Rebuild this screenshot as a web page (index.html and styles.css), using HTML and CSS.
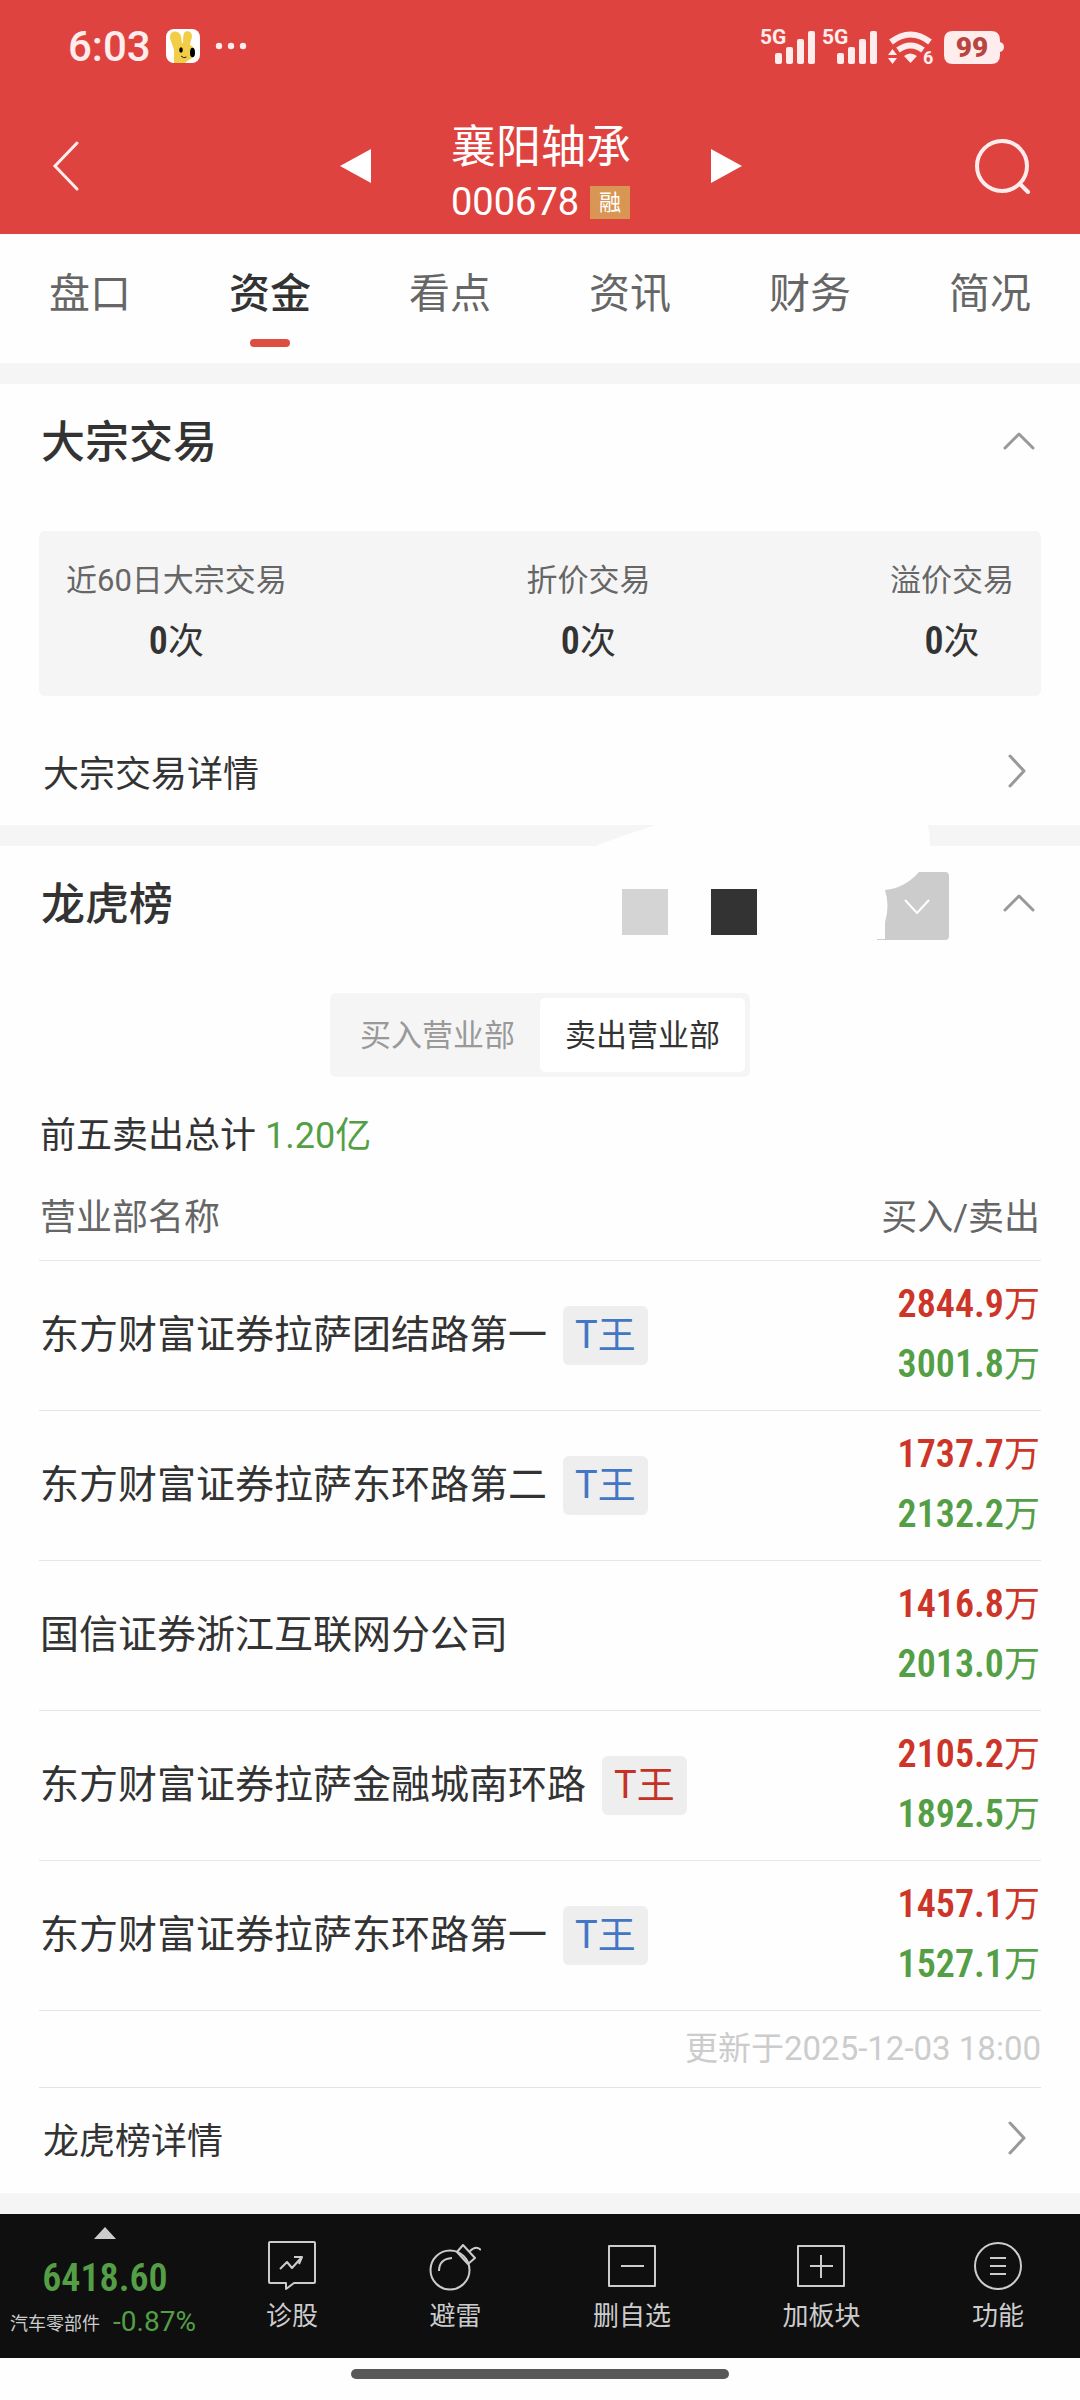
FILE: index.html
```html
<!DOCTYPE html>
<html lang="zh-CN">
<head>
<meta charset="utf-8">
<meta name="viewport" content="width=device-width, initial-scale=1">
<title>襄阳轴承 000678</title>
<link rel="stylesheet" href="styles.css">
</head>
<body>
<header class="top">
  <div class="status">
    <span class="clock">6:03</span>
    <svg class="app-icon" width="34" height="34" viewBox="0 0 34 34" aria-hidden="true">
      <rect width="34" height="34" rx="8" fill="#fff"/>
      <path d="M8 34V21C7 16 4 12 4 8c0-7 9-7 11-1l1 7h1c0-4 0-7 1-10 2-3 8-2 8 3 0 3-2 6-2 9 4 2 6 6 4 11-2 3-6 4-9 7z" fill="#f2cd47"/>
      <ellipse cx="15" cy="21" rx="1.800" ry="2.800"/><ellipse cx="26.500" cy="23.500" rx="2.500" ry="4.800"/>
      <path d="M15 27q3 3 5.500 1" fill="none" stroke="#222" stroke-width="1"/>
    </svg>
    <svg width="32" height="8" viewBox="0 0 32 8" aria-hidden="true"><g fill="#ffecec"><circle cx="4" cy="4" r="3.200"/><circle cx="16" cy="4" r="3.200"/><circle cx="28" cy="4" r="3.200"/></g></svg>
    <svg class="signals" width="246" height="52" viewBox="0 -6 246 52" aria-label="信号与电量">
      <g fill="#ffecec">
        <text class="net" x="0" y="18">5G</text>
        <rect x="15" y="27" width="7" height="11" rx="2"/><rect x="26" y="21" width="7" height="17" rx="2"/><rect x="37" y="13" width="7" height="25" rx="2"/><rect x="48" y="5" width="7" height="33" rx="2"/>
        <text class="net" x="62" y="18">5G</text>
        <rect x="77" y="27" width="7" height="11" rx="2"/><rect x="88" y="21" width="7" height="17" rx="2"/><rect x="99" y="13" width="7" height="25" rx="2"/><rect x="110" y="5" width="7" height="33" rx="2"/>
        <path d="M144 30q6-5 13 0l-6.500 7z"/>
        <path d="M128 29l4.500-6 4.500 6zM128 32h9l-4.500 6z"/>
        <text class="gen" x="163" y="38">6</text>
        <path d="M193 5h38q9 0 9 9v2q4 1 4 5t-4 5v3q0 9-9 9h-38q-9 0-9-9V14q0-9 9-9z"/>
      </g>
      <path d="M131 16q19.500-15 39 0M138 24q12.500-9 25 0" fill="none" stroke="#ffecec" stroke-width="6"/>
      <text class="level" x="212" y="31" text-anchor="middle">99</text>
    </svg>
  </div>
  <div class="titlebar">
    <button class="icon-btn" aria-label="返回"><svg width="28" height="50" viewBox="0 0 28 50"><path d="M26 2L4 25l22 23" fill="none" stroke="#ffecec" stroke-width="3" stroke-linecap="round"/></svg></button>
    <div class="switcher">
      <button class="icon-btn" aria-label="上一只"><svg width="31" height="34" viewBox="0 0 31 34"><path d="M31 0v34L0 17z" fill="#fff"/></svg></button>
      <div class="stock">
        <h1 class="stock-name">襄阳轴承</h1>
        <div class="stock-code">000678<span class="margin-tag">融</span></div>
      </div>
      <button class="icon-btn" aria-label="下一只"><svg width="31" height="34" viewBox="0 0 31 34"><path d="M0 0v34l31-17z" fill="#fff"/></svg></button>
    </div>
    <button class="icon-btn search" aria-label="搜索"><svg width="58" height="56" viewBox="0 0 58 56"><g fill="none" stroke="#ffecec" stroke-width="4" stroke-linecap="round"><circle cx="29" cy="28" r="25"/><path d="M47 46l8 8"/></g></svg></button>
  </div>
</header>

<nav class="tabs">
  <a href="#" class="tab">盘口</a>
  <a href="#" class="tab tab-active">资金</a>
  <a href="#" class="tab">看点</a>
  <a href="#" class="tab">资讯</a>
  <a href="#" class="tab">财务</a>
  <a href="#" class="tab">简况</a>
</nav>

<main>
  <div class="band"></div>
  <section class="panel">
    <div class="panel-head">
      <h2 class="panel-title">大宗交易</h2>
      <button class="icon-btn" aria-label="收起"><svg width="32" height="18" viewBox="0 0 32 18"><path class="chev" d="M2 16L16 2l14 14"/></svg></button>
    </div>
    <dl class="stats">
      <div class="stat"><dt>近60日大宗交易</dt><dd><b class="din">0</b>次</dd></div>
      <div class="stat"><dt>折价交易</dt><dd><b class="din">0</b>次</dd></div>
      <div class="stat"><dt>溢价交易</dt><dd><b class="din">0</b>次</dd></div>
    </dl>
    <a href="#" class="more more-spaced">大宗交易详情<svg class="more-icon" width="18" height="34" viewBox="0 0 18 34"><path class="chev" d="M2 2l14 15L2 32"/></svg></a>
  </section>

  <div class="band">
    <svg class="band-gap" width="336" height="21" viewBox="0 0 336 21" aria-hidden="true"><path d="M2 21Q24 12 62 0h272q2 10 2 21z" fill="#fefefe"/></svg>
  </div>

  <section class="panel">
    <div class="panel-head">
      <h2 class="panel-title">龙虎榜</h2>
      <svg class="marks" width="327" height="68" viewBox="0 0 327 68" aria-hidden="true">
        <rect y="17" width="46" height="46" fill="#d4d4d4"/>
        <rect x="89" y="17" width="46" height="46" fill="#333"/>
        <path d="M297 0h26q4 0 4 4v60q0 4-4 4h-68v-1h8V50q5-16 0-32 20-2 34-18z" fill="#ccc"/>
        <path d="M283 28l12 13 12-13" fill="none" stroke="#fff" stroke-width="2"/>
      </svg>
      <button class="icon-btn" aria-label="收起"><svg width="32" height="18" viewBox="0 0 32 18"><path class="chev" d="M2 16L16 2l14 14"/></svg></button>
    </div>
    <div class="segment">
      <button class="seg">买入营业部</button>
      <button class="seg seg-active">卖出营业部</button>
    </div>
    <p class="total">前五卖出总计 <span class="down">1.20亿</span></p>
    <table class="board">
      <thead><tr><th>营业部名称</th><th class="num">买入/卖出</th></tr></thead>
      <tbody>
        <tr><td>东方财富证券拉萨团结路第一<span class="tag">T王</span></td><td class="num"><div class="up"><b class="din">2844.9</b>万</div><div class="down"><b class="din">3001.8</b>万</div></td></tr>
        <tr><td>东方财富证券拉萨东环路第二<span class="tag">T王</span></td><td class="num"><div class="up"><b class="din">1737.7</b>万</div><div class="down"><b class="din">2132.2</b>万</div></td></tr>
        <tr><td>国信证券浙江互联网分公司</td><td class="num"><div class="up"><b class="din">1416.8</b>万</div><div class="down"><b class="din">2013.0</b>万</div></td></tr>
        <tr><td>东方财富证券拉萨金融城南环路<span class="tag tag-red">T王</span></td><td class="num"><div class="up"><b class="din">2105.2</b>万</div><div class="down"><b class="din">1892.5</b>万</div></td></tr>
        <tr><td>东方财富证券拉萨东环路第一<span class="tag">T王</span></td><td class="num"><div class="up"><b class="din">1457.1</b>万</div><div class="down"><b class="din">1527.1</b>万</div></td></tr>
      </tbody>
    </table>
    <p class="updated">更新于2025-12-03 18:00</p>
    <a href="#" class="more">龙虎榜详情<svg class="more-icon" width="18" height="34" viewBox="0 0 18 34"><path class="chev" d="M2 2l14 15L2 32"/></svg></a>
  </section>
  <div class="band"></div>
</main>

<footer>
  <div class="toolbar">
    <button class="index">
      <svg width="22" height="12" viewBox="0 0 22 12"><path d="M11 0l11 12H0z" fill="#ccc"/></svg>
      <b class="index-value din">6418.60</b>
      <span class="index-line"><span class="index-name">汽车零部件</span><span class="index-change">-0.87%</span></span>
    </button>
    <div class="tools">
      <button class="tool"><svg width="52" height="52" viewBox="0 0 52 52"><g class="line"><path d="M4 2h44q1 0 1 1v39q0 1-1 1H28l-8 6v-6H4q-1 0-1-1V3q0-1 1-1z"/><path d="M14 29l7-7 5 6 9-10M28 17h8l-3 7"/></g></svg>诊股</button>
      <button class="tool"><svg width="52" height="52" viewBox="0 0 52 52"><g class="line"><circle cx="21" cy="30" r="19.500"/><path d="M10 31q0-12 13-13M28 12l6-7 12 13-7 6zM41 11q6-6 11-1"/></g></svg>避雷</button>
      <button class="tool"><svg width="52" height="52" viewBox="0 0 52 52"><g class="line"><path d="M3 6h46v40H3zM15 26h23"/></g></svg>删自选</button>
      <button class="tool"><svg width="52" height="52" viewBox="0 0 52 52"><g class="line"><path d="M3 6h46v40H3zM15 26h23M26 15v23"/></g></svg>加板块</button>
      <button class="tool"><svg width="52" height="52" viewBox="0 0 52 52"><g class="line"><circle cx="26" cy="26" r="23"/><path d="M18 18h16M18 26h16M18 34h16"/></g></svg>功能</button>
    </div>
  </div>
  <div class="home"><span class="home-bar"></span></div>
</footer>
</body>
</html>
```
FILE: styles.css
```css
* { box-sizing: border-box; }
body, h1, h2, p, dl, dd { margin: 0; }
body {
  background: #fefefe;
  color: #333;
  font-family: Roboto, "Noto Sans CJK SC", sans-serif;
  font-size: 36px;
}
button {
  padding: 0;
  border: 0;
  background: none;
  color: inherit;
  font: inherit;
}
a { color: inherit; text-decoration: none; }
svg { display: block; flex: none; }
.din {
  font-family: "Roboto Condensed", "Liberation Sans Narrow", "Liberation Sans", sans-serif;
  font-size: 38px;
  font-weight: 600;
}
.icon-btn { display: flex; }
.chev { fill: none; stroke: #999; stroke-width: 3; stroke-linecap: round; stroke-linejoin: round; }

/* red header */
.top { background: #df4340; color: #fff; }
.status {
  display: flex;
  align-items: center;
  height: 92px;
  padding: 0 74px 0 68px;
}
.clock { color: #ffecec; font-size: 42px; font-weight: 500; }
.app-icon { margin: 0 15px; }
.signals { margin-left: auto; }
.net { font-size: 21px; font-weight: 700; }
.gen { font-size: 18px; font-weight: 700; }
.level { fill: #b84540; font-size: 28px; font-weight: 900; }
.titlebar {
  display: grid;
  grid-template-columns: 1fr auto 1fr;
  align-items: center;
  height: 142px;
  padding: 6px 49px 0 51px;
}
.switcher { display: flex; align-items: center; gap: 80px; }
.search { justify-self: end; }
.stock { padding-top: 18px; }
.stock-name { font-size: 45px; font-weight: 400; line-height: 54px; }
.stock-code { display: flex; align-items: center; font-size: 38px; line-height: 54px; }
.margin-tag {
  width: 40px;
  margin-left: 11px;
  background: #d99553;
  font-size: 22px;
  line-height: 33px;
  text-align: center;
}

/* tabs */
.tabs { display: grid; grid-template-columns: repeat(6, 1fr); height: 129px; }
.tab {
  display: flex;
  flex-direction: column;
  align-items: center;
  padding-top: 30px;
  color: #666;
  font-size: 41px;
  line-height: 60px;
}
.tab-active { color: #333; font-weight: 500; }
.tab-active::after {
  content: "";
  width: 40px;
  height: 8px;
  margin-top: 15px;
  border-radius: 4px;
  background: #df4d41;
}

/* panels */
.band { position: relative; height: 21px; background: #f5f5f5; }
.band-gap { position: absolute; top: 0; right: 150px; }
.panel { padding: 0 39px; }
.panel-head { display: flex; align-items: center; height: 114px; padding: 0 6px 0 2px; }
.panel-title { flex: 1; padding-bottom: 4px; font-size: 44px; font-weight: 500; }
.marks { margin: 6px 54px 0 0; }
.stats {
  display: flex;
  justify-content: space-between;
  height: 165px;
  margin-top: 33px;
  padding: 20px 27px;
  border-radius: 6px;
  background: #f5f5f5;
  text-align: center;
}
.stat dt { color: #666; font-size: 31px; line-height: 60px; }
.stat dd { line-height: 60px; }
.more {
  display: flex;
  align-items: center;
  height: 105px;
  padding: 0 15px 4px 4px;
}
.more-spaced { margin-top: 24px; }
.more-icon { margin-left: auto; }
.segment {
  display: grid;
  grid-template-columns: 1fr 1fr;
  width: 420px;
  height: 84px;
  margin: 33px auto 23px;
  padding: 5px;
  border-radius: 6px;
  background: #f5f5f5;
}
.seg { padding-bottom: 5px; border-radius: 5px; color: #999; font-size: 31px; }
.seg-active { background: #fff; color: #333; }
.total { padding-left: 1px; line-height: 72px; }
.up { color: #cc3528; }
.down { color: #549f46; }

/* broker table */
.board { width: 100%; border-collapse: collapse; }
.board th, .board td { padding: 0 1px; border-bottom: 1px solid #e6e6e6; text-align: left; }
.board th { height: 88px; padding-bottom: 4px; color: #666; font-weight: 400; }
.board td { height: 150px; font-size: 39px; line-height: 59px; white-space: nowrap; }
.board .num { text-align: right; }
.board td.num { font-size: 36px; }
.tag {
  display: inline-block;
  margin-left: 16px;
  padding: 0 12px;
  border-radius: 6px;
  background: #eee;
  color: #4377c4;
  font-size: 38px;
}
.tag-red { color: #c43226; }
.updated {
  border-bottom: 1px solid #e3e3e3;
  color: #ccc;
  font-size: 33px;
  line-height: 76px;
  text-align: right;
}

/* bottom toolbar */
.toolbar { display: flex; height: 144px; background: #0f0f0f; color: #ccc; }
.index { display: flex; flex-direction: column; align-items: center; width: 210px; padding-top: 13px; }
.index-value { margin-top: 10px; color: #549f46; line-height: 58px; }
.index-line { display: flex; align-items: center; gap: 13px; height: 30px; margin-right: 4px; }
.index-name { font-size: 18px; }
.index-change { color: #549f46; font-size: 28px; }
.tools { display: flex; flex: 1; justify-content: space-between; padding: 26px 56px 0; }
.tool {
  display: flex;
  flex-direction: column;
  align-items: center;
  font-size: 26px;
  line-height: 48px;
}
.line { fill: none; stroke: #ccc; stroke-width: 2; stroke-linejoin: round; }
.home { display: flex; justify-content: center; height: 42px; padding-top: 11px; }
.home-bar { width: 35%; height: 10px; border-radius: 5px; background: #585858; }
```
